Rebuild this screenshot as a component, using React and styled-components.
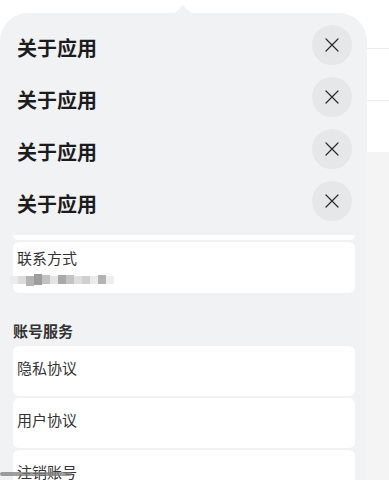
import React from 'react';
import styled, { createGlobalStyle } from 'styled-components';

const GlobalStyle = createGlobalStyle`
    html, body {
        margin: 0;
        padding: 0;
        background: #ffffff;
        font-family: "Noto Sans CJK SC", "Noto Sans", sans-serif;
    }
`;

const Page = styled.div`
    position: relative;
    width: 389px;
    height: 480px;
    overflow: hidden;
    background: #ffffff;
`;

const Backdrop = styled.div`
    display: flex;
    flex-direction: column;
    height: 100%;
`;

const BgRow = styled.div`
    height: ${({ $h }) => $h}px;
    border-bottom: ${({ $line }) => ($line ? '1px solid #ececee' : 'none')};
    background: #ffffff;
`;

const BgFill = styled.div`
    flex: 1;
    background: #f4f4f5;
`;

const Popover = styled.div`
    position: absolute;
    top: 13px;
    left: 0;
    width: 367px;
    bottom: -40px;
    background: #f1f2f4;
    border-radius: 28px 28px 0 0;
    padding-top: 6px;
    box-sizing: border-box;

    &::before {
        content: '';
        position: absolute;
        top: -8px;
        left: 175px;
        border-left: 8px solid transparent;
        border-right: 8px solid transparent;
        border-bottom: 8px solid #f1f2f4;
    }
`;

const HeadRow = styled.div`
    height: 52px;
    display: flex;
    align-items: center;
    justify-content: space-between;
    padding: 0 15px 0 17px;
`;

const HeadTitle = styled.span`
    font-size: 20px;
    line-height: 24px;
    font-weight: 700;
    color: #1c1c1e;
    padding-top: 6px;
`;

const CloseButton = styled.button`
    width: 40px;
    height: 40px;
    border-radius: 50%;
    border: none;
    padding: 0;
    background: #e6e7e9;
    display: flex;
    align-items: center;
    justify-content: center;
`;

const Body = styled.div`
    padding: 0 12px 0 13px;
`;

const CardList = styled.div`
    display: flex;
    flex-direction: column;
    gap: 2px;
`;

const CardTail = styled.div`
    height: 5px;
    margin-top: 8px;
    background: #ffffff;
    border-radius: 0 0 6px 6px;
`;

const Card = styled.div`
    height: ${({ $h }) => $h || 50}px;
    background: #ffffff;
    border-radius: 6px;
    padding: ${({ $pt }) => $pt ?? 12}px 4px 0 4px;
    box-sizing: border-box;
`;

const CardText = styled.div`
    font-size: 15px;
    line-height: 20px;
    color: #333333;
`;

const Mosaic = styled.div`
    display: flex;
    align-items: flex-start;
    margin: 5px 0 0 -7px;
    filter: blur(0.5px);
`;

const Block = styled.span`
    width: 8px;
    height: ${({ $h }) => $h}px;
    margin-top: ${({ $t }) => $t}px;
    background: ${({ $c }) => $c};
`;

const SectionTitle = styled.div`
    margin: 28px 0 5px;
    font-size: 15px;
    line-height: 20px;
    font-weight: 700;
    color: #333333;
`;

const ScrollThumb = styled.div`
    position: absolute;
    left: 0;
    top: 472px;
    width: 72px;
    height: 4px;
    border-radius: 2px;
    background: rgba(125, 125, 125, 0.75);
`;

const CloseIcon = () => (
    <svg width="14" height="14" viewBox="0 0 14 14" fill="none">
        <path d="M1 1L13 13M13 1L1 13" stroke="#2b2b2b" strokeWidth="1.2" strokeLinecap="round" />
    </svg>
);

const mosaic = [
    ['#ececec', 8, 3], ['#dcdcdc', 8, 3], ['#b4b4b4', 10, 3], ['#9d9d9d', 11, 1],
    ['#c2c2c2', 9, 2], ['#e4e4e4', 8, 3], ['#a9a9a9', 9, 2], ['#c4c4c4', 9, 2],
    ['#dedede', 8, 3], ['#cfcfcf', 8, 3], ['#ebebeb', 8, 3], ['#b3b3b3', 9, 2],
    ['#eeeeee', 8, 3],
];

const App = () => {
    return (
        <Page>
            <GlobalStyle />
            <Backdrop>
                <BgRow $h={48} $line />
                <BgRow $h={51} $line />
                <BgRow $h={51} />
                <BgFill />
            </Backdrop>
            <Popover>
                {[0, 1, 2, 3].map((i) => (
                    <HeadRow key={i}>
                        <HeadTitle>关于应用</HeadTitle>
                        <CloseButton aria-label="关闭">
                            <CloseIcon />
                        </CloseButton>
                    </HeadRow>
                ))}
                <Body>
                    <CardList>
                        <CardTail />
                        <Card $h={51} $pt={6}>
                            <CardText>联系方式</CardText>
                            <Mosaic>
                                {mosaic.map(([c, h, t], i) => (
                                    <Block key={i} $c={c} $h={h} $t={t} />
                                ))}
                            </Mosaic>
                        </Card>
                    </CardList>
                    <SectionTitle>账号服务</SectionTitle>
                    <CardList>
                        <Card><CardText>隐私协议</CardText></Card>
                        <Card><CardText>用户协议</CardText></Card>
                        <Card><CardText>注销账号</CardText></Card>
                    </CardList>
                </Body>
            </Popover>
            <ScrollThumb />
        </Page>
    );
};

export default App;
